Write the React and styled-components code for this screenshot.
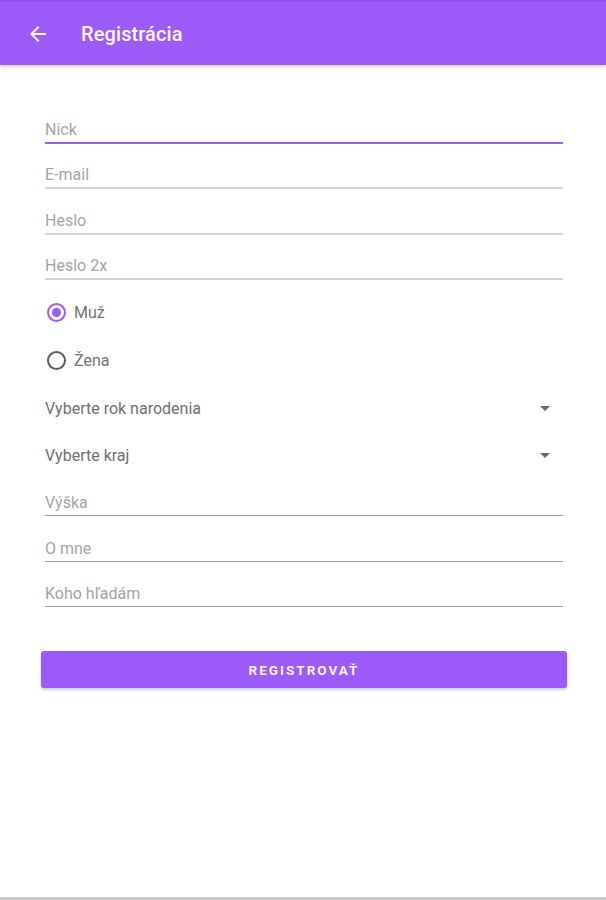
import React, { useState } from "react";
import styled, { createGlobalStyle } from "styled-components";

const PURPLE = "#9c5af7";

const GlobalStyle = createGlobalStyle`
  * { box-sizing: border-box; }
  body {
    margin: 0;
    background: #ffffff;
    font-family: Roboto, "Liberation Sans", sans-serif;
  }
`;

const Page = styled.div`
  height: 900px;
  display: flex;
  flex-direction: column;
  background: #ffffff;
  border-bottom: 3px solid #c9c9c9;
`;

const Header = styled.header`
  height: 65px;
  flex-shrink: 0;
  display: flex;
  align-items: center;
  padding-left: 26px;
  background: ${PURPLE};
  border-top: 2px solid #8f4eea;
  box-shadow: 0 2px 4px rgba(0, 0, 0, 0.18);
  position: relative;
  z-index: 1;
`;

const BackButton = styled.button`
  border: 0;
  background: none;
  padding: 0;
  width: 24px;
  height: 24px;
  display: flex;
  cursor: pointer;
`;

const Title = styled.h1`
  margin: 0 0 0 31px;
  color: #fdf7ff;
  font-size: 20px;
  font-weight: 500;
  letter-spacing: 0.1px;
`;

const Form = styled.form`
  display: flex;
  flex-direction: column;
  padding: 34px 43px 0 45px;
`;

const Field = styled.label`
  display: flex;
  align-items: flex-end;
  height: ${({ h }) => h || 45}px;
  padding-bottom: 2px;
  border-bottom: ${({ active, dark }) =>
    active ? `2px solid ${PURPLE}` : dark ? "1px solid #9d9d9d" : "2px solid #d3d3d3"};
`;

const Input = styled.input`
  width: 100%;
  border: 0;
  outline: none;
  padding: 0;
  background: transparent;
  font-family: inherit;
  font-size: 16px;
  line-height: 20px;
  height: 20px;
  color: #333;

  &::placeholder {
    color: #a3a3a3;
  }
`;

const RadioGroup = styled.div`
  display: flex;
  flex-direction: column;
  margin-top: 8px;
`;

const RadioRow = styled.div`
  height: 48px;
  display: flex;
  align-items: center;
  gap: 8px;
  padding-left: 2px;
  cursor: pointer;
  font-size: 16px;
  color: #727272;
`;

const RadioCircle = styled.span`
  width: 19px;
  height: 19px;
  border-radius: 50%;
  border: 2px solid ${({ checked }) => (checked ? PURPLE : "#5c5c5c")};
  display: flex;
  align-items: center;
  justify-content: center;

  &::after {
    content: "";
    width: 9px;
    height: 9px;
    border-radius: 50%;
    background: ${({ checked }) => (checked ? PURPLE : "transparent")};
  }
`;

const SelectRow = styled.div`
  height: 47px;
  display: flex;
  align-items: center;
  justify-content: space-between;
  padding-right: 13px;
  font-size: 16px;
  color: #6e6e6e;
  margin-top: ${({ first }) => (first ? "1px" : "0")};
`;

const Caret = styled.span`
  width: 0;
  height: 0;
  border-left: 5px solid transparent;
  border-right: 5px solid transparent;
  border-top: 5px solid #666;
`;

const SubmitButton = styled.button`
  margin: 44px -4px 0 -4px;
  height: 37px;
  border: 0;
  border-radius: 3px;
  background: ${PURPLE};
  color: #fbf4ff;
  font-family: inherit;
  font-size: 13.5px;
  font-weight: 700;
  letter-spacing: 2px;
  box-shadow: 0 2px 3px rgba(0, 0, 0, 0.22);
  cursor: pointer;
`;

const ArrowBack = () => (
  <svg width="24" height="24" viewBox="0 0 24 24">
    <path fill="#fdf7ff" d="M20 11H7.83l5.59-5.59L12 4l-8 8 8 8 1.41-1.41L7.83 13H20v-2z" />
  </svg>
);

export default function App() {
  const [gender, setGender] = useState("m");

  return (
    <Page>
      <GlobalStyle />
      <Header>
        <BackButton aria-label="Späť">
          <ArrowBack />
        </BackButton>
        <Title>Registrácia</Title>
      </Header>
      <Form onSubmit={(e) => e.preventDefault()}>
        <Field active>
          <Input placeholder="Nick" />
        </Field>
        <Field>
          <Input placeholder="E-mail" />
        </Field>
        <Field h={46}>
          <Input type="password" placeholder="Heslo" />
        </Field>
        <Field>
          <Input type="password" placeholder="Heslo 2x" />
        </Field>
        <RadioGroup>
          <RadioRow onClick={() => setGender("m")}>
            <RadioCircle checked={gender === "m"} />
            Muž
          </RadioRow>
          <RadioRow onClick={() => setGender("f")}>
            <RadioCircle checked={gender === "f"} />
            Žena
          </RadioRow>
        </RadioGroup>
        <SelectRow first>
          Vyberte rok narodenia
          <Caret />
        </SelectRow>
        <SelectRow>
          Vyberte kraj
          <Caret />
        </SelectRow>
        <Field dark h={37}>
          <Input placeholder="Výška" />
        </Field>
        <Field dark h={46}>
          <Input placeholder="O mne" />
        </Field>
        <Field dark>
          <Input placeholder="Koho hľadám" />
        </Field>
        <SubmitButton type="submit">REGISTROVAŤ</SubmitButton>
      </Form>
    </Page>
  );
}
